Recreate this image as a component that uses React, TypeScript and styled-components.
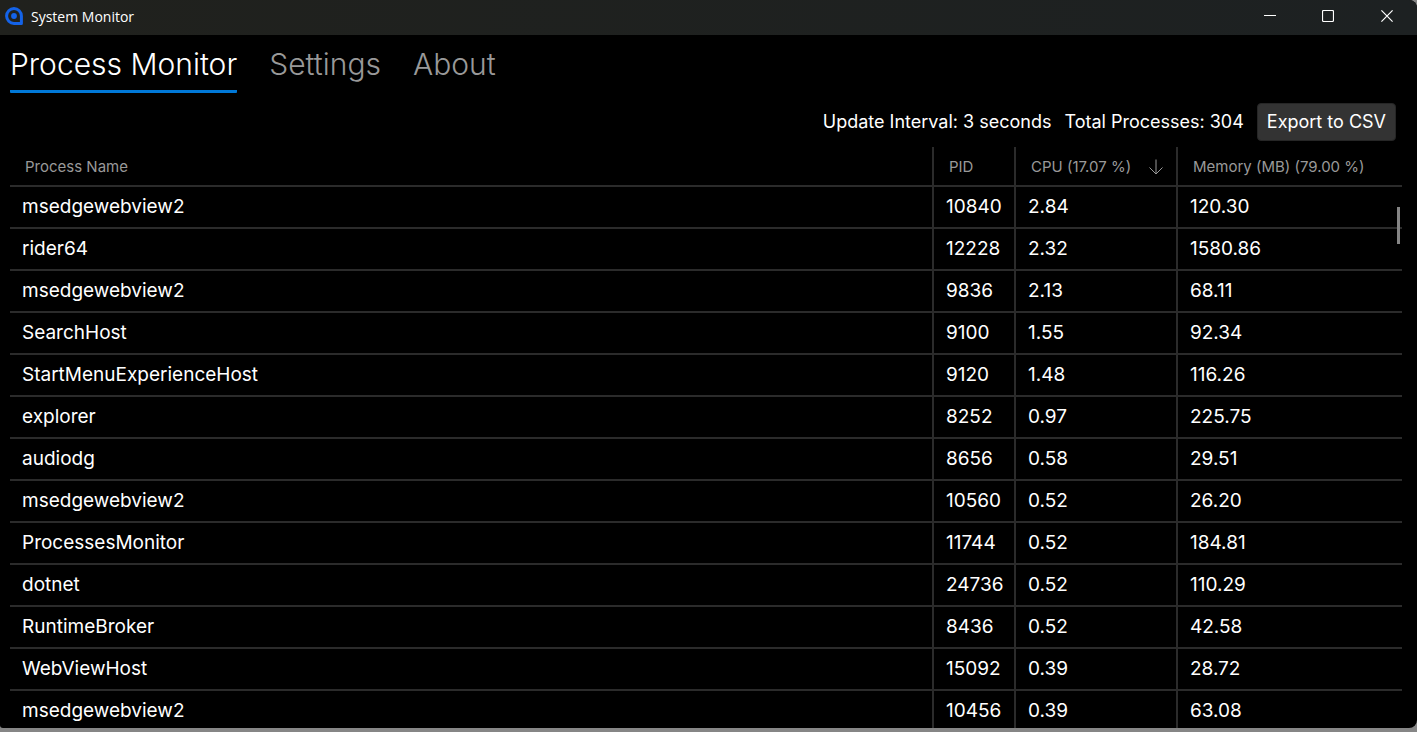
import React from "react";
import styled, { createGlobalStyle } from "styled-components";

const GlobalStyle = createGlobalStyle`
  * { box-sizing: border-box; }
  body {
    margin: 0;
    background: #868686;
    color: #ffffff;
    font-family: Inter, "Liberation Sans", sans-serif;
  }
  button { font: inherit; color: inherit; border: 0; padding: 0; background: none; }
`;

const Desktop = styled.div`
  height: 100vh;
  padding-bottom: 4px;
`;

const Window = styled.div`
  display: flex;
  flex-direction: column;
  height: 100%;
  overflow: hidden;
  background: #000000;
  border-radius: 0 8px 8px 3px;
`;

const TitleBar = styled.header`
  display: flex;
  align-items: center;
  flex: none;
  height: 35px;
  padding: 0 0 3px 5px;
  background: linear-gradient(90deg, #20211d, #1d2122);
`;

const AppTitle = styled.span`
  flex: 1;
  margin-left: 8px;
  padding-top: 2px;
  font: 14px/20px "Open Sans", "Noto Sans", sans-serif;
`;

const CaptionButton = styled.button`
  display: grid;
  place-items: center;
  width: 58px;
  height: 32px;

  &:last-child { width: 60px; }
`;

const Tabs = styled.nav`
  display: flex;
  flex: none;
  gap: 32px;
  padding: 10px 10px 0;
`;

const Tab = styled.a<{ $active?: boolean }>`
  height: 48px;
  border-bottom: 3px solid ${(p) => (p.$active ? "#0078d7" : "transparent")};
  border-radius: 1px;
  color: ${(p) => (p.$active ? "#ffffff" : "#999999")};
  font-size: 30px;
  font-weight: 300;
  line-height: 38px;
  text-decoration: none;
`;

const Toolbar = styled.div`
  display: flex;
  flex: none;
  align-items: center;
  justify-content: flex-end;
  gap: 13px;
  padding: 10px 21px 6px 10px;
  font-size: 18px;
  line-height: 24px;
`;

const ExportButton = styled.button`
  height: 38px;
  padding: 0 9px 1px;
  border: 1px solid #262626;
  border-radius: 4px;
  background: #333333;
`;

const Grid = styled.main`
  position: relative;
  flex: 1;
  min-height: 0;
  margin: 0 15px 0 10px;
  overflow: hidden;
`;

const Table = styled.table`
  width: 100%;
  table-layout: fixed;
  border-spacing: 0;
`;

const Column = styled.col<{ $width?: number }>`
  width: ${(p) => (p.$width ? `${p.$width}px` : "auto")};
`;

const HeaderCell = styled.th`
  height: 40px;
  padding: 2px 13px 0 15px;
  border: 0 solid #2b2b2b;
  border-width: 0 2px 2px 0;
  color: #999999;
  font-size: 15px;
  font-weight: 400;
  line-height: 20px;
  text-align: left;
  white-space: nowrap;

  &:last-child { border-right: 0; }
`;

const SortLabel = styled.span`
  display: flex;
  align-items: center;
  justify-content: space-between;
`;

const Cell = styled.td`
  height: 42px;
  padding: 0 0 0 12px;
  border: 0 solid #2b2b2b;
  border-width: 0 2px 2px 0;
  font-size: 19px;
  line-height: 24px;
  white-space: nowrap;

  &:last-child { border-right: 0; }
`;

const ScrollThumb = styled.div`
  position: absolute;
  top: 60px;
  right: 2px;
  width: 3px;
  height: 37px;
  background: #858585;
`;

const processes = [
  ["msedgewebview2", "10840", "2.84", "120.30"],
  ["rider64", "12228", "2.32", "1580.86"],
  ["msedgewebview2", "9836", "2.13", "68.11"],
  ["SearchHost", "9100", "1.55", "92.34"],
  ["StartMenuExperienceHost", "9120", "1.48", "116.26"],
  ["explorer", "8252", "0.97", "225.75"],
  ["audiodg", "8656", "0.58", "29.51"],
  ["msedgewebview2", "10560", "0.52", "26.20"],
  ["ProcessesMonitor", "11744", "0.52", "184.81"],
  ["dotnet", "24736", "0.52", "110.29"],
  ["RuntimeBroker", "8436", "0.52", "42.58"],
  ["WebViewHost", "15092", "0.39", "28.72"],
  ["msedgewebview2", "10456", "0.39", "63.08"],
];

export default function App() {
  return (
    <Desktop>
      <GlobalStyle />
      <Window>
        <TitleBar>
          <svg width="18" height="18" viewBox="0 0 18 18" aria-hidden="true">
            <path d="M9 1.6A7.4 7.4 0 1 0 9 16.4H16.4V9A7.4 7.4 0 0 0 9 1.6Z" fill="none" stroke="#1463e8" strokeWidth="3" strokeLinejoin="round" />
            <circle cx="9" cy="9" r="2.9" fill="#1463e8" />
          </svg>
          <AppTitle>System Monitor</AppTitle>
          <CaptionButton aria-label="Minimize">
            <svg width="12" height="12" viewBox="0 0 12 12" stroke="#fff"><path d="M0 5.5H12" /></svg>
          </CaptionButton>
          <CaptionButton aria-label="Maximize">
            <svg width="12" height="12" viewBox="0 0 12 12" fill="none" stroke="#fff"><rect x=".5" y=".5" width="11" height="11" rx="1.2" strokeWidth="1.2" /></svg>
          </CaptionButton>
          <CaptionButton aria-label="Close">
            <svg width="12" height="12" viewBox="0 0 12 12" stroke="#fff" strokeWidth="1.2"><path d="M.4.4 11.6 11.6M11.6.4.4 11.6" /></svg>
          </CaptionButton>
        </TitleBar>
        <Tabs>
          <Tab href="#processes" $active>Process Monitor</Tab>
          <Tab href="#settings">Settings</Tab>
          <Tab href="#about">About</Tab>
        </Tabs>
        <Toolbar>
          <span>Update Interval: 3 seconds</span>
          <span>Total Processes: 304</span>
          <ExportButton>Export to CSV</ExportButton>
        </Toolbar>
        <Grid>
          <Table>
            <colgroup>
              <Column />
              <Column $width={82} />
              <Column $width={162} />
              <Column $width={224} />
            </colgroup>
            <thead>
              <tr>
                <HeaderCell>Process Name</HeaderCell>
                <HeaderCell>PID</HeaderCell>
                <HeaderCell aria-sort="descending">
                  <SortLabel>
                    CPU (17.07 %)
                    <svg width="14" height="16" viewBox="0 0 14 16" fill="none" stroke="#999" strokeWidth="1"><path d="M7 .5V15M.5 8.5 7 15 13.5 8.5" /></svg>
                  </SortLabel>
                </HeaderCell>
                <HeaderCell>Memory (MB) (79.00 %)</HeaderCell>
              </tr>
            </thead>
            <tbody>
              {processes.map((row) => (
                <tr key={row[1]}>
                  {row.map((value, i) => (
                    <Cell key={i}>{value}</Cell>
                  ))}
                </tr>
              ))}
            </tbody>
          </Table>
          <ScrollThumb />
        </Grid>
      </Window>
    </Desktop>
  );
}
